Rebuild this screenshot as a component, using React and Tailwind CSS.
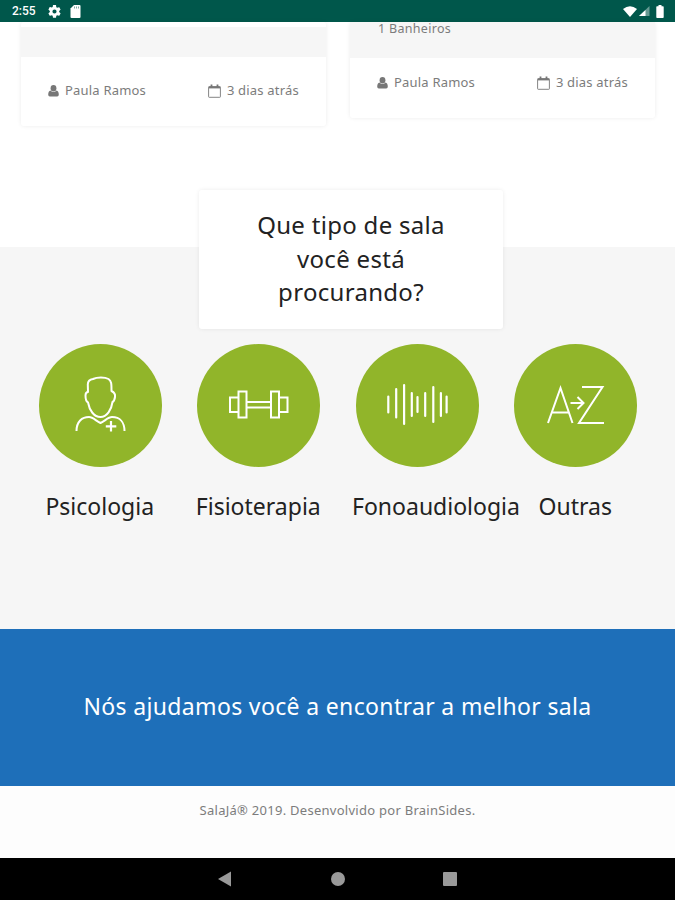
import React from "react";

const UserIcon = () => (
    <svg className="w-[11px] h-[12px]" viewBox="0 0 11 12" fill="#777">
        <ellipse cx="5.5" cy="3.300" rx="2.900" ry="3.300" />
        <path d="M2.500 5.500Q0.300 6 0.200 9.500Q0.200 11.500 1.800 11.500h7.400Q10.800 11.500 10.800 9.500Q10.700 6 8.500 5.500Q5.500 8.500 2.500 5.500z" />
    </svg>
);

const CalendarIcon = () => (
    <svg className="w-[13px] h-[14px]" viewBox="0 0 13 14" fill="none" stroke="#777">
        <rect x="0.6" y="2.5" width="11.8" height="10.8" rx="0.6" strokeWidth="0.9" />
        <path d="M1 3.600h11" strokeWidth="1.6" />
        <path d="M3.500 0.400v3M9.500 0.400v3" strokeWidth="1.8" />
    </svg>
);

const PersonIcon = () => (
    <svg className="w-[123px] h-[123px]" viewBox="0 0 123 123" fill="none" stroke="#fff" strokeWidth="2" strokeLinejoin="round">
        <path d="M49 48L48.800 40.500C48.800 37 50.500 35.500 54 35C58 33 66 33 69.500 35C72.500 37 72.500 39.500 72.500 47C75.500 48.500 76.500 50 76 53C75.500 56.500 74.500 57.500 73.500 58C72.500 65.500 68 73 61.500 73C55 73 50.500 66.500 49 58.500C47 57.500 46.500 54.500 46.500 51.500C46.500 49 47.500 48 49 48Z" />
        <path d="M37.500 87C37.500 77.500 43 73 50 73C54 73 57 77 61.500 79C66 77 69 73 73 73C81 73 85.500 78.500 85.500 87" />
        <path d="M72 77v10.500M66.800 82.300h10.500" strokeWidth="2.2" />
    </svg>
);

const DumbbellIcon = () => (
    <svg className="w-[123px] h-[123px]" viewBox="0 0 123 123" fill="none" stroke="#fff" strokeWidth="2">
        <rect x="41.500" y="47.500" width="8" height="26" />
        <rect x="74" y="47.500" width="8" height="26" />
        <path d="M41.500 53.500H33v14.500h8.500M82 53.500h8.500v14.500H82M49.500 58H74M49.500 63.500H74" />
    </svg>
);

const SoundIcon = () => (
    <svg className="w-[123px] h-[123px]" viewBox="0 0 123 123" fill="none" stroke="#fff" strokeWidth="2.2" strokeLinecap="round">
        <path d="M32.300 52.500v16M40.200 45v28.500M48.100 41v39M55.800 49v23M61.500 53v15M69.200 49v23M77.300 43v35M84.900 49v23M90.600 52.500v16" />
    </svg>
);

const SortIcon = () => (
    <svg className="w-[123px] h-[123px]" viewBox="0 0 123 123" fill="none" stroke="#fff" strokeWidth="2">
        <path d="M34 79L46.500 44L58.500 79M38 68.500h17" />
        <path d="M68 43H88.500L65 79H90" />
        <path d="M56.500 59H69M63.500 53L69.500 59L63.500 65" />
    </svg>
);

const categories = [
    { name: "Psicologia", icon: <PersonIcon /> },
    { name: "Fisioterapia", icon: <DumbbellIcon /> },
    { name: "Fonoaudiologia", icon: <SoundIcon /> },
    { name: "Outras", icon: <SortIcon /> },
];

const RoomFooter = () => (
    <div className="flex items-center justify-between pl-[27px] pr-[27px] h-[18px] text-[13px] text-[#7c7c7c] tracking-[0.2px] whitespace-nowrap">
        <div className="flex items-center gap-[6px]">
            <UserIcon />
            <span>Paula Ramos</span>
        </div>
        <div className="flex items-center gap-[6px]">
            <CalendarIcon />
            <span>3 dias atrás</span>
        </div>
    </div>
);

const StatusBar = () => (
    <div className="h-[22px] bg-[#00574b] flex items-center justify-between pl-[12px] pr-[11px] text-white">
        <div className="flex items-center">
            <span className="w-[36px] font-[Roboto] font-medium text-[12px] leading-[22px]">2:55</span>
            <svg className="w-[13px] h-[13px]" viewBox="2 2 20 20" fill="#fff">
                <path d="M19.140 12.940a7 7 0 0 0 0-1.880l2.030-1.580a.5.5 0 0 0 .12-.61l-1.920-3.320a.5.5 0 0 0-.59-.22l-2.390.96a7 7 0 0 0-1.620-.94l-.36-2.540A.5.5 0 0 0 13.930 2h-3.840a.5.5 0 0 0-.48.410l-.36 2.540a7 7 0 0 0-1.620.94l-2.390-.96a.5.5 0 0 0-.59.220L2.730 8.870a.5.5 0 0 0 .12.610l2.030 1.580a7 7 0 0 0 0 1.880l-2.030 1.580a.5.5 0 0 0-.12.610l1.920 3.320c.12.220.37.290.59.220l2.390-.96c.5.380 1.030.7 1.620.94l.36 2.540c.5.240.24.410.48.410h3.840c.24 0 .44-.17.470-.41l.36-2.540a7 7 0 0 0 1.620-.94l2.390.96c.22.080.47 0 .59-.22l1.920-3.320a.5.5 0 0 0-.12-.61zM12 15.200a3.200 3.200 0 1 1 0-6.400 3.200 3.200 0 0 1 0 6.400z" />
            </svg>
            <svg className="w-[11px] h-[13px] ml-[9px]" viewBox="0 0 11 13">
                <path d="M4 0h5.500Q10.500 0 10.500 1v11q0 1-1 1h-8q-1 0-1-1V3.500z" fill="#fff" />
                <path d="M4.500 1.500v2M6.500 1.500v2M8.500 1.500v2" stroke="#00574b" strokeWidth="0.5" />
            </svg>
        </div>
        <div className="flex items-center">
            <svg className="w-[14px] h-[11px]" viewBox="0 0 14 11" fill="#fff">
                <path d="M0 3Q7-2.500 14 3L7 11z" />
            </svg>
            <svg className="w-[11px] h-[10px] ml-[2px]" viewBox="0 0 11 10" fill="#fff">
                <path d="M10.500 0v10H0z" opacity="0.4" />
                <path d="M6.500 4v6H0z" />
            </svg>
            <svg className="w-[8px] h-[13px] ml-[6px]" viewBox="0 0 8 13" fill="#fff">
                <path d="M2.500 0h3v1.300H7q.7 0 .7.700v10q0 1-.7 1H1q-.7 0-.7-1V2q0-.7.700-.7h1.500z" />
            </svg>
        </div>
    </div>
);

const App = () => {
    return (
        <div className="w-[675px] h-[900px] overflow-hidden flex flex-col bg-white font-['Noto_Sans',sans-serif]">
            <StatusBar />

            {/* end of the rooms list */}
            <div className="h-[225px] flex items-start gap-[24px] pl-[21px]">
                <div className="w-[305px] h-[104px] rounded-[3px] bg-white shadow-[0_0_4px_rgba(0,0,0,0.08)]">
                    <div className="mt-[5px] h-[30px] bg-[#f6f6f6]"></div>
                    <div className="pt-[25px]">
                        <RoomFooter />
                    </div>
                </div>
                <div className="w-[305px] h-[96px] rounded-[3px] bg-white shadow-[0_0_4px_rgba(0,0,0,0.08)]">
                    <div className="h-[36px] bg-[#f6f6f6] pl-[28px] text-[12.500px] leading-[13px] text-[#7c7c7c] tracking-[0.3px]">1 Banheiros</div>
                    <div className="pt-[16px]">
                        <RoomFooter />
                    </div>
                </div>
            </div>

            {/* categories */}
            <div className="h-[382px] bg-[#f6f6f6]">
                <div className="-mt-[57px] ml-[199px] w-[304px] h-[139px] rounded-[3px] bg-white shadow-[0_0_4px_rgba(0,0,0,0.08)] relative pt-[18px] text-center text-[24px] leading-[33.500px] text-[#222] tracking-[0.3px]">
                    <p>Que tipo de sala</p>
                    <p>você está</p>
                    <p>procurando?</p>
                </div>
                <div className="mt-[15px] ml-[21px] w-[634px] grid grid-cols-4">
                    {categories.map((item) => (
                        <div key={item.name} className="px-[15px] min-w-0">
                            <div className="w-[123px] h-[123px] mx-auto rounded-full bg-[#91b52a]">
                                {item.icon}
                            </div>
                            <p className="mt-[21px] -ml-px text-center whitespace-nowrap text-[23px] leading-[36px] text-[#222]">{item.name}</p>
                        </div>
                    ))}
                </div>
            </div>

            <div className="h-[157px] bg-[#1e6fb9] flex items-center justify-center pb-[2px] text-white text-[23px] tracking-[0.350px] whitespace-nowrap">
                <p>Nós ajudamos você a encontrar a melhor sala</p>
            </div>

            <div className="h-[72px] bg-[#fdfdfd] pt-[14px] text-center text-[13px] leading-[20px] text-[#7c7c7c] tracking-[0.27px]">
                SalaJá® 2019. Desenvolvido por BrainSides.
            </div>

            {/* android navigation */}
            <div className="h-[42px] bg-black flex items-center pl-[218px]">
                <svg className="w-[13px] h-[16px]" viewBox="0 0 13 16" fill="#999"><path d="M13 0.500v15L0 8z" /></svg>
                <div className="ml-[100px] w-[14px] h-[14px] rounded-full bg-[#999]"></div>
                <div className="ml-[98px] w-[14px] h-[14px] rounded-[1px] bg-[#999]"></div>
            </div>
        </div>
    );
};

export default App;
